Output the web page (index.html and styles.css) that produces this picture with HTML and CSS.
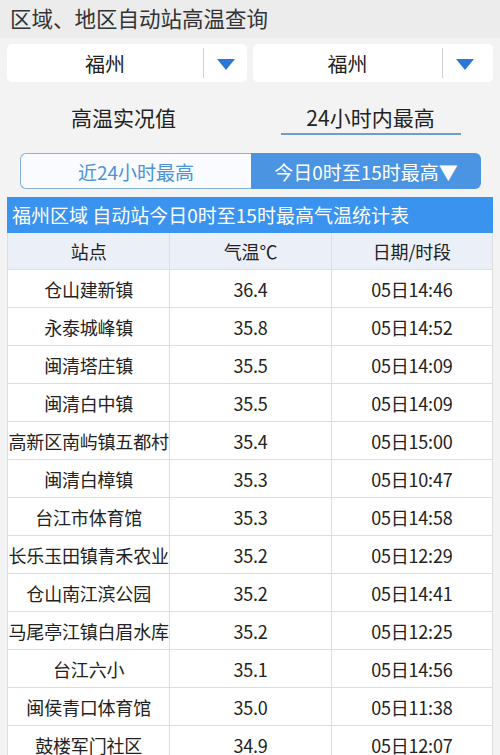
FILE: index.html
```html
<!DOCTYPE html>
<html lang="zh">
<head>
<meta charset="utf-8">
<link rel="stylesheet" href="styles.css">
</head>
<body>
<div class="topbar">区域、地区自动站高温查询</div>
<div class="selects">
  <div class="select"><span class="sel-text">福州</span><span class="sel-arrow"><i class="tri"></i></span></div>
  <div class="select"><span class="sel-text">福州</span><span class="sel-arrow wide"><i class="tri"></i></span></div>
</div>
<div class="tabs">
  <div class="tab">高温实况值</div>
  <div class="tab active"><span>24小时内最高</span></div>
</div>
<div class="seg">
  <div class="seg-item">近24小时最高</div>
  <div class="seg-item on">今日0时至15时最高▼</div>
</div>
<div class="table">
  <div class="caption">福州区域 自动站今日0时至15时最高气温统计表</div>
  <div class="row head"><div>站点</div><div>气温℃</div><div>日期/时段</div></div>
  <div class="row"><div>仓山建新镇</div><div>36.4</div><div>05日14:46</div></div>
  <div class="row"><div>永泰城峰镇</div><div>35.8</div><div>05日14:52</div></div>
  <div class="row"><div>闽清塔庄镇</div><div>35.5</div><div>05日14:09</div></div>
  <div class="row"><div>闽清白中镇</div><div>35.5</div><div>05日14:09</div></div>
  <div class="row"><div>高新区南屿镇五都村</div><div>35.4</div><div>05日15:00</div></div>
  <div class="row"><div>闽清白樟镇</div><div>35.3</div><div>05日10:47</div></div>
  <div class="row"><div>台江市体育馆</div><div>35.3</div><div>05日14:58</div></div>
  <div class="row"><div>长乐玉田镇青禾农业</div><div>35.2</div><div>05日12:29</div></div>
  <div class="row"><div>仓山南江滨公园</div><div>35.2</div><div>05日14:41</div></div>
  <div class="row"><div>马尾亭江镇白眉水库</div><div>35.2</div><div>05日12:25</div></div>
  <div class="row"><div>台江六小</div><div>35.1</div><div>05日14:56</div></div>
  <div class="row"><div>闽侯青口体育馆</div><div>35.0</div><div>05日11:38</div></div>
  <div class="row"><div>鼓楼军门社区</div><div>34.9</div><div>05日12:07</div></div>
</div>
</body>
</html>
```
FILE: styles.css
```css
* { box-sizing: border-box; }
html, body { margin: 0; padding: 0; }
body {
  width: 500px;
  height: 755px;
  overflow: hidden;
  background: #f3f3f3;
  font-family: "Noto Sans CJK SC", "Noto Sans", sans-serif;
  color: #222;
}
.topbar {
  height: 38px;
  background: #ececec;
  padding-left: 10px;
  font-size: 21.5px;
  line-height: 36px;
  color: #333;
}
.selects {
  display: flex;
  gap: 6px;
  padding: 0 7px;
  margin-top: 6px;
}
.select {
  flex: 1;
  height: 38px;
  background: #fff;
  border-radius: 5px;
  display: flex;
  align-items: center;
}
.sel-text {
  flex: 1;
  text-align: center;
  font-size: 20px;
  color: #222;
}
.sel-arrow {
  width: 44px;
  height: 30px;
  border-left: 1px solid #d0d0d0;
  display: flex;
  align-items: center;
  justify-content: center;
}
.sel-arrow.wide {
  width: 51px;
  padding-right: 7px;
}
.tri {
  width: 0;
  height: 0;
  border-left: 9px solid transparent;
  border-right: 9px solid transparent;
  border-top: 11px solid #2a78d4;
  margin-top: 2px;
}
.tabs {
  display: flex;
  margin-top: 20px;
  height: 35px;
}
.tab {
  flex: 1;
  text-align: center;
  font-size: 21px;
  line-height: 30px;
  color: #222;
}
.tab.active {
  padding-right: 6px;
}
.tab.active span {
  display: inline-block;
  width: 180px;
  border-bottom: 2px solid #6c9fcc;
  padding-bottom: 1px;
}
.seg {
  display: flex;
  margin: 16px 19px 0 20px;
  height: 36px;
}
.seg-item {
  flex: 1;
  display: flex;
  align-items: center;
  justify-content: center;
  font-size: 19px;
}
.seg-item:first-child {
  background: #f9fbfe;
  border: 1.5px solid #86b3dc;
  border-right: none;
  border-radius: 6px 0 0 6px;
  color: #4c93d8;
}
.seg-item.on {
  background: #4b94e2;
  color: #fff;
  border-radius: 0 6px 6px 0;
}
.table {
  margin: 8px 7px 0 7px;
  background: #fff;
  border-left: 1px solid #dedede;
  border-right: 1px solid #dedede;
}
.caption {
  height: 36px;
  background: #3a93ef;
  color: #fff;
  font-size: 19px;
  line-height: 36px;
  padding-left: 5px;
  margin: 0 -1px;
}
.row {
  display: grid;
  grid-template-columns: 1fr 1fr 1fr;
  height: 38px;
  border-bottom: 1px solid #dedede;
  font-size: 18px;
}
.row > div {
  display: flex;
  align-items: center;
  justify-content: center;
  white-space: nowrap;
  letter-spacing: -0.2px;
}
.row > div + div {
  border-left: 1px solid #dedede;
}
.row.head {
  height: 37px;
  background: #ebf0f8;
}
```
